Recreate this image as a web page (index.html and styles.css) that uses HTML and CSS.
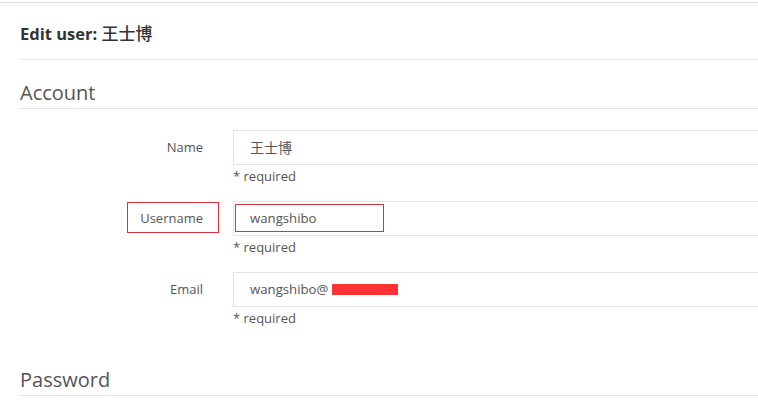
FILE: index.html
```html
<!DOCTYPE html>
<html lang="zh">
<head>
    <meta charset="UTF-8">
    <title>Edit user</title>
    <link rel="stylesheet" href="styles.css">
</head>
<body>
    <div class="top_line"></div>
    <div class="page">
        <h1 class="page_title">Edit user: <span class="cjk">王士博</span></h1>

        <h2 class="section_title">Account</h2>

        <!-- Name -->
        <div class="form_row">
            <label class="row_label">Name</label>
            <div class="row_field">
                <div class="caja_input"><span class="cjk">王士博</span></div>
                <p class="help">* required</p>
            </div>
        </div>

        <!-- Username -->
        <div class="form_row">
            <label class="row_label"><span class="marca marca_label">Username</span></label>
            <div class="row_field">
                <div class="caja_input"><span class="marca marca_input">wangshibo</span></div>
                <p class="help">* required</p>
            </div>
        </div>

        <!-- Email -->
        <div class="form_row">
            <label class="row_label">Email</label>
            <div class="row_field">
                <div class="caja_input">wangshibo@<span class="tapado"></span></div>
                <p class="help">* required</p>
            </div>
        </div>

        <h2 class="section_title section_password">Password</h2>
    </div>
</body>
</html>
```

FILE: styles.css
```css
html, body {
    margin: 0;
    padding: 0;
    background-color: #fff;
    overflow: hidden;
}

body {
    font-family: "Open Sans", "Noto Sans CJK SC", sans-serif;
    color: #555;
}

.cjk {
    font-family: "Noto Sans CJK SC", sans-serif;
}

.top_line {
    margin-top: 2px;
    height: 2px;
    border-top: 1px solid #dedede;
    border-bottom: 1px solid #f6f6f6;
}

.page {
    padding-left: 20px;
}

.page_title {
    margin: 0;
    height: 53px;
    line-height: 53px;
    font-size: 16.5px;
    font-weight: 700;
    color: #333;
    border-bottom: 1px solid #e8e8e8;
}

.page_title .cjk {
    font-weight: 500;
    font-size: 17px;
}

.section_title {
    margin: 0;
    padding-top: 18px;
    height: 30px;
    line-height: 30px;
    font-size: 20px;
    font-weight: 400;
    color: #555;
    border-bottom: 1px solid #e3e3e3;
}

.section_password {
    margin-top: 20px;
}

.form_row {
    display: flex;
    margin-top: 21px;
}

.form_row + .form_row {
    margin-top: 16px;
}

.row_label {
    width: 183px;
    padding-right: 15px;
    margin-right: 15px;
    height: 35px;
    line-height: 35px;
    text-align: right;
    font-size: 13px;
    flex-shrink: 0;
}

.row_field {
    flex: 1;
}

.caja_input {
    position: relative;
    height: 33px;
    line-height: 33px;
    border: 1px solid #e3e3e3;
    border-right: none;
    padding-left: 16px;
    font-size: 13.2px;
    color: #555;
}

.caja_input .cjk {
    font-size: 14px;
}

.help {
    margin: 2px 0 0;
    font-size: 13px;
    line-height: 18px;
    color: #555;
}

.marca {
    position: relative;
}

.marca::after {
    content: "";
    position: absolute;
    border: 1px solid #d9303f;
}

.marca_label::after {
    left: -13px;
    right: -16px;
    top: -7px;
    bottom: -6px;
}

.marca_input::after {
    left: -15px;
    width: 147px;
    top: -5px;
    bottom: -5px;
}

.tapado {
    display: inline-block;
    width: 66px;
    height: 11px;
    margin-left: 4px;
    vertical-align: -1px;
    background-color: #ff3333;
}
```
